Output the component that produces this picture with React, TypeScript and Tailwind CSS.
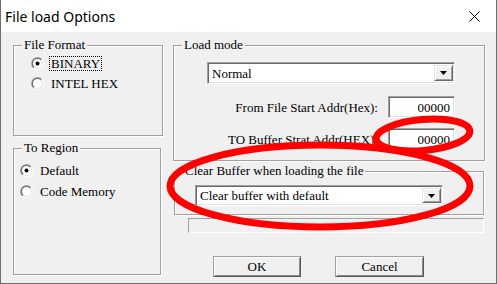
import React from "react";

const serif = "font-['Liberation_Serif',serif] text-[13px] text-black";

function Radio({ checked }: { checked?: boolean }) {
  return (
    <svg width="13" height="13" viewBox="0 0 13 13" className="shrink-0">
      <defs>
        <linearGradient id="rOuter" x1="0" y1="0" x2="1" y2="1">
          <stop offset="0.5" stopColor="#a0a0a0" />
          <stop offset="0.5" stopColor="#ffffff" />
        </linearGradient>
        <linearGradient id="rInner" x1="0" y1="0" x2="1" y2="1">
          <stop offset="0.5" stopColor="#696969" />
          <stop offset="0.5" stopColor="#e3e3e3" />
        </linearGradient>
      </defs>
      <circle cx="6.5" cy="6.5" r="6.5" fill="url(#rOuter)" />
      <circle cx="6.5" cy="6.5" r="5.5" fill="url(#rInner)" />
      <circle cx="6.5" cy="6.5" r="4.5" fill="#fff" />
      {checked && <circle cx="6.5" cy="6.5" r="2" fill="#000" />}
    </svg>
  );
}

function GroupBox({
  label,
  className,
  children,
}: {
  label: string;
  className: string;
  children?: React.ReactNode;
}) {
  return (
    <div
      className={`relative shrink-0 border border-[#a0a0a0] shadow-[inset_1px_1px_0_#fff,1px_1px_0_#fff] ${className}`}
    >
      <span className={`absolute left-[8px] top-[-9px] bg-[#f0f0f0] px-[2px] leading-[15px] ${serif}`}>
        {label}
      </span>
      {children}
    </div>
  );
}

const sunken =
  "border border-t-[#a0a0a0] border-l-[#a0a0a0] border-b-white border-r-white shadow-[inset_1px_1px_0_#696969,inset_-1px_-1px_0_#e3e3e3] bg-white";

function Combo({ value, className }: { value: string; className: string }) {
  return (
    <div className={`flex items-center ${sunken} ${className}`}>
      <span className={`flex-1 pl-[4px] leading-[15px] ${serif}`}>{value}</span>
      <div className="mr-[1px] flex h-[calc(100%-4px)] w-[19px] items-center justify-center border border-t-[#e3e3e3] border-l-[#e3e3e3] border-b-[#696969] border-r-[#696969] bg-[#f0f0f0] shadow-[inset_1px_1px_0_#fff,inset_-1px_-1px_0_#a0a0a0]">
        <svg width="7" height="4" viewBox="0 0 7 4">
          <polygon points="0,0 7,0 3.5,4" fill="#000" />
        </svg>
      </div>
    </div>
  );
}

function AddrRow({ label, className }: { label: string; className: string }) {
  return (
    <div className={`flex items-center justify-end gap-[10px] pr-[29px] ${className}`}>
      <span className={`leading-[15px] ${serif}`}>{label}</span>
      <div className={`flex h-[22px] w-[67px] items-center justify-end pr-[4px] ${sunken}`}>
        <span className={`leading-[15px] ${serif}`}>00000</span>
      </div>
    </div>
  );
}

function Button({ label, className }: { label: string; className: string }) {
  return (
    <div
      className={`flex h-[21px] items-center justify-center border border-t-[#a0a0a0] border-l-[#a0a0a0] border-b-[#5a5a5a] border-r-[#5a5a5a] bg-[#f0f0f0] shadow-[inset_1px_1px_0_#fff,inset_-1px_-1px_0_#8a8a8a] ${className}`}
    >
      <span className={`leading-[15px] ${serif}`}>{label}</span>
    </div>
  );
}

export default function App() {
  return (
    <div className="relative flex h-[284px] w-[497px] flex-col overflow-hidden border-x border-b border-[#6e6e6e] bg-[#f0f0f0]">
      {/* Title bar */}
      <div className="flex h-[32px] shrink-0 items-center justify-between bg-white pl-[4px] pr-[16px]">
        <span className="font-['Noto_Sans',sans-serif] text-[14px] text-black">File load Options</span>
        <svg width="11" height="11" viewBox="0 0 11 11">
          <path d="M0.5 0.5 L10.5 10.5 M10.5 0.5 L0.5 10.5" stroke="#000" strokeWidth="1" />
        </svg>
      </div>

      {/* Client */}
      <div className="flex flex-1 pl-[12px] pt-[13px]">
        <div className="flex w-[150px] flex-col">
          <GroupBox label="File Format" className="h-[91px] w-[150px]">
            <div className="flex flex-col gap-[6px] pl-[17px] pt-[10px]">
              <div className="flex items-center gap-[5px]">
                <Radio checked />
                <span className={`border border-dotted border-black px-[1px] leading-[13px] ${serif}`}>BINARY</span>
              </div>
              <div className="flex items-center gap-[7px]">
                <Radio />
                <span className={`leading-[13px] ${serif}`}>INTEL HEX</span>
              </div>
            </div>
          </GroupBox>
          <GroupBox label="To Region" className="mt-[12px] h-[127px] w-[148px]">
            <div className="flex flex-col gap-[8px] pl-[6px] pt-[15px]">
              <div className="flex items-center gap-[7px]">
                <Radio checked />
                <span className={`leading-[13px] ${serif}`}>Default</span>
              </div>
              <div className="flex items-center gap-[7px]">
                <Radio />
                <span className={`leading-[13px] ${serif}`}>Code Memory</span>
              </div>
            </div>
          </GroupBox>
        </div>

        <div className="ml-[10px] flex flex-col">
          <GroupBox label="Load mode" className="h-[116px] w-[312px]">
            <Combo value="Normal" className="ml-[33px] mt-[16px] h-[22px] w-[248px]" />
            <AddrRow label="From File Start Addr(Hex):" className="mt-[12px]" />
            <AddrRow label="TO Buffer Strat Addr(HEX):" className="mt-[10px]" />
          </GroupBox>
          <GroupBox label="Clear Buffer when loading the file" className="ml-[1px] mt-[10px] h-[44px] w-[310px]">
            <Combo value="Clear buffer with default" className="ml-[20px] mt-[13px] h-[21px] w-[248px]" />
          </GroupBox>
          <div className="ml-[15px] mt-[3px] h-[15px] w-[296px] border border-t-[#a0a0a0] border-l-[#a0a0a0] border-b-white border-r-white" />
          <div className="mt-[23px] flex">
            <Button label="OK" className="ml-[40px] w-[88px]" />
            <Button label="Cancel" className="ml-[34px] w-[89px]" />
          </div>
        </div>
      </div>

      {/* Red annotation marks */}
      <svg className="pointer-events-none absolute left-[-1px] top-0" width="497" height="284" viewBox="0 0 497 284">
        <ellipse cx="320" cy="186" rx="150" ry="41" fill="none" stroke="#ff0000" strokeWidth="7" />
        <ellipse cx="423" cy="135" rx="47" ry="15.5" fill="none" stroke="#ff0000" strokeWidth="7" transform="rotate(-5 423 135)" />
      </svg>
    </div>
  );
}
